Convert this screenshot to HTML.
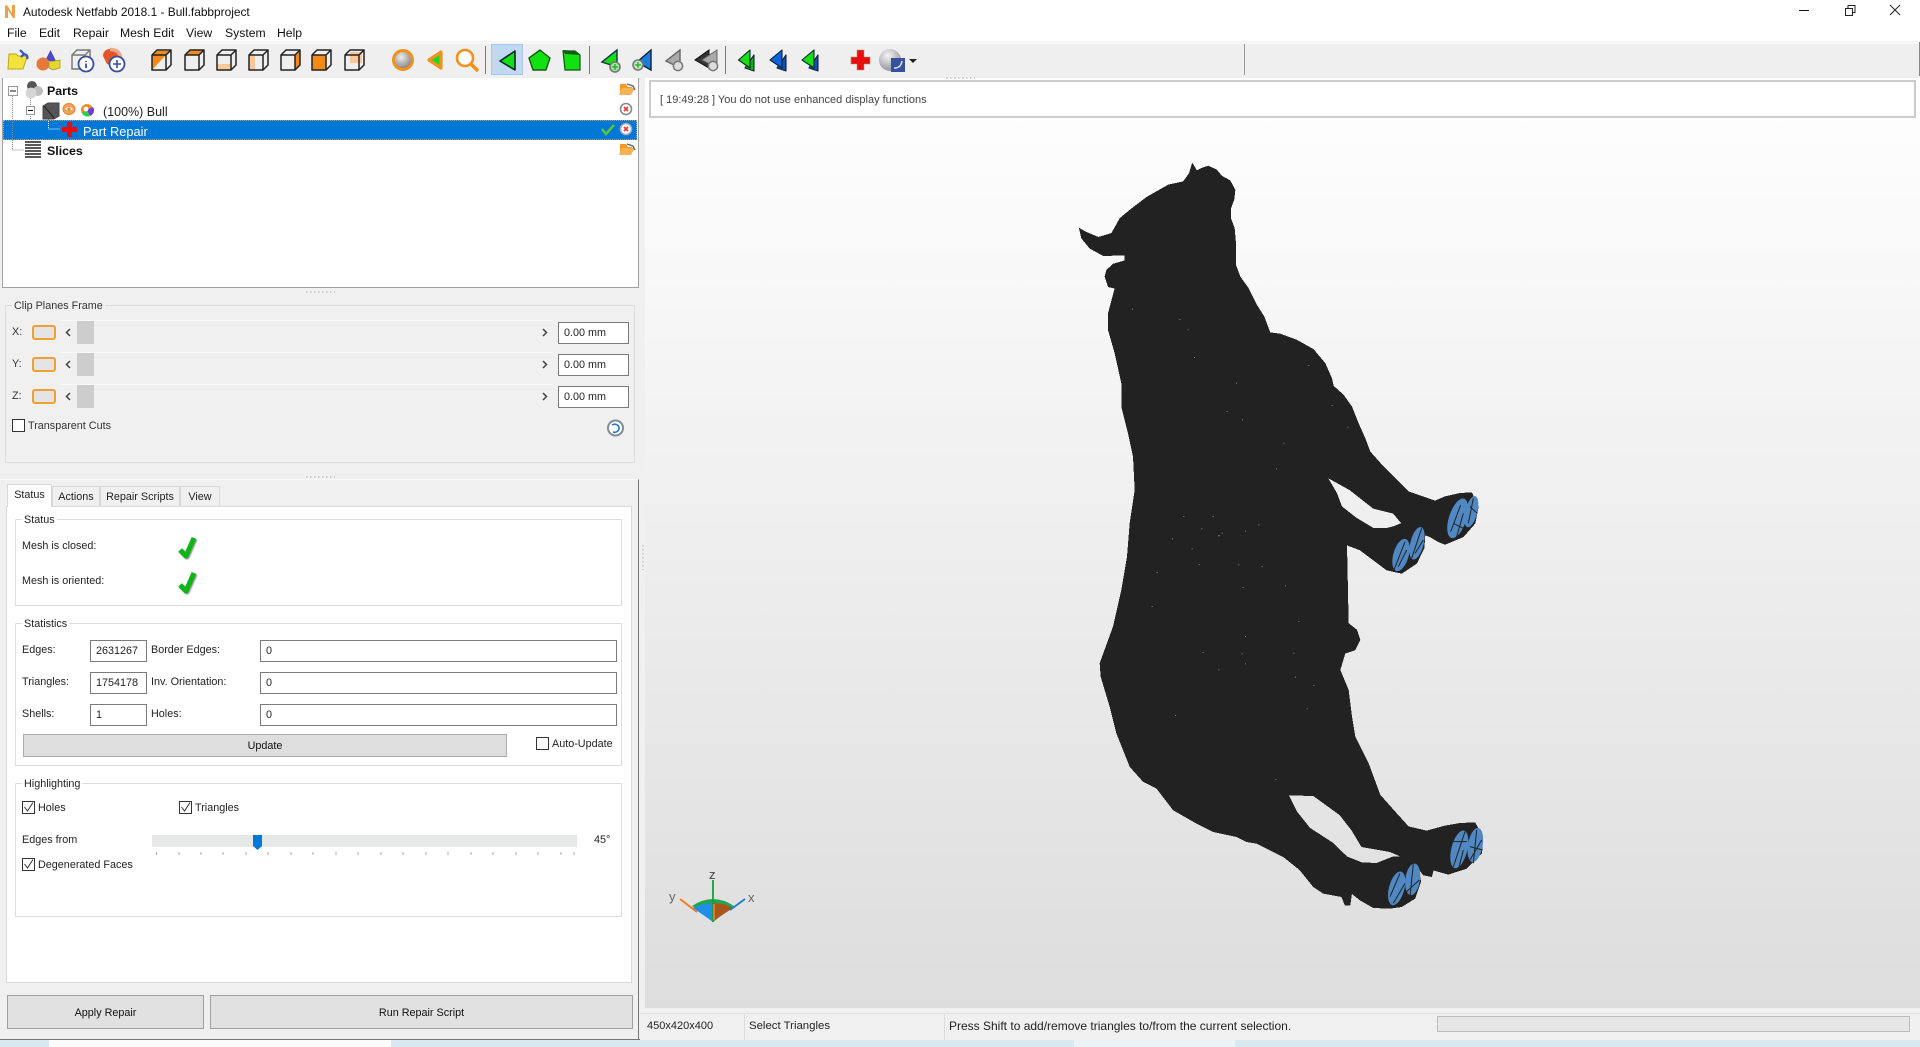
<!DOCTYPE html>
<html><head><meta charset="utf-8"><title>Autodesk Netfabb 2018.1 - Bull.fabbproject</title>
<style>
html,body{margin:0;padding:0;width:1920px;height:1047px;overflow:hidden;background:#f0f0f0}
body{position:relative;font-family:"Liberation Sans",sans-serif;font-size:10.8px;color:#222}
.a{position:absolute;box-sizing:border-box}
.t{position:absolute;white-space:nowrap;height:16px;line-height:16px;margin-top:1px}
.n{margin-top:0}
.m{font-size:12.2px;color:#111;height:18px;line-height:18px;margin-top:0}
.g{position:absolute;box-sizing:border-box;border:1px solid #dcdcdc}
.i{position:absolute;box-sizing:border-box;background:#fff;border:1px solid #7a7a7a;line-height:20px;padding-left:5px;font-size:10.8px;color:#222}
.c{position:absolute;box-sizing:border-box;width:13px;height:13px;border:1px solid #333;background:#fff}
.b{position:absolute;box-sizing:border-box;background:#e1e1e1;border:1px solid #adadad;text-align:center;font-size:10.8px;color:#111}
.th{position:absolute;left:77px;width:17px;height:23px;background:#cdcdcd}
.tr{position:absolute;left:60px;width:493px;height:1px;background:#f9f9f9}
.cb{position:absolute;left:32px;width:24px;height:15px;box-sizing:border-box;border:2px solid #f0a030;border-radius:3px;background:#e4e4e4}
.tab{position:absolute;box-sizing:border-box;border:1px solid #d9d9d9;border-bottom:none;background:#f0f0f0;text-align:center;font-size:10.8px;line-height:20px;top:486px;height:20px}
</style></head><body>

<!-- title + menu -->
<div class="a" style="left:0;top:0;width:1920px;height:41px;background:#fff"></div>
<div class="t n" style="left:23px;top:3px;font-size:11.9px;height:18px;line-height:18px;color:#111">Autodesk Netfabb 2018.1 - Bull.fabbproject</div>
<div class="t m" style="left:7px;top:24px">File</div>
<div class="t m" style="left:39px;top:24px">Edit</div>
<div class="t m" style="left:73px;top:24px">Repair</div>
<div class="t m" style="left:120px;top:24px">Mesh Edit</div>
<div class="t m" style="left:186px;top:24px">View</div>
<div class="t m" style="left:225px;top:24px">System</div>
<div class="t m" style="left:277px;top:24px">Help</div>

<!-- toolbar -->
<div class="a" style="left:0;top:41px;width:1920px;height:37px;background:#efefef;border-top:3px solid #f6f6f6"></div>
<div class="a" style="left:1919px;top:42px;width:1px;height:34px;background:#888"></div>
<div class="a" style="left:491px;top:44px;width:32px;height:31px;background:#bfdaf0;border:1px solid #a4c8e6"></div>
<div class="a" style="left:485px;top:46px;width:1px;height:28px;background:#777"></div>
<div class="a" style="left:589px;top:46px;width:1px;height:28px;background:#777"></div>
<div class="a" style="left:725px;top:46px;width:1px;height:28px;background:#777"></div>
<div class="a" style="left:1244px;top:44px;width:1px;height:31px;background:#999"></div>

<!-- tree panel -->
<div class="a" style="left:2px;top:78px;width:637px;height:210px;background:#fff;border:1px solid #a0a0a0;border-top:none"></div>
<div class="a" style="left:3px;top:120px;width:634px;height:20px;background:#0078d7;border:1px dotted #8ab"></div>
<div class="t" style="left:47px;top:81px;font-size:12.4px;font-weight:bold;height:18px;line-height:18px;color:#111">Parts</div>
<div class="t" style="left:103px;top:102px;font-size:12.5px;height:18px;line-height:18px;color:#222">(100%) Bull</div>
<div class="t" style="left:83px;top:122px;font-size:12.8px;height:18px;line-height:18px;color:#fff">Part Repair</div>
<div class="t" style="left:47px;top:141px;font-size:12.4px;font-weight:bold;height:18px;line-height:18px;color:#111">Slices</div>

<!-- clip planes -->
<div class="g" style="left:5px;top:305px;width:630px;height:158px"></div>
<div class="t" style="left:12px;top:297px;background:#f0f0f0;padding:0 2px;color:#333">Clip Planes Frame</div>
<div class="t" style="left:12px;top:323px;color:#333">X:</div>
<div class="t" style="left:12px;top:355px;color:#333">Y:</div>
<div class="t" style="left:12px;top:387px;color:#333">Z:</div>
<div class="cb" style="top:325px"></div><div class="cb" style="top:357px"></div><div class="cb" style="top:389px"></div>
<div class="tr" style="top:320px"></div><div class="tr" style="top:352px"></div><div class="tr" style="top:384px"></div>
<div class="th" style="top:321px"></div><div class="th" style="top:353px"></div><div class="th" style="top:385px"></div>
<div class="i" style="left:558px;top:322px;width:71px;height:22px">0.00 mm</div>
<div class="i" style="left:558px;top:354px;width:71px;height:22px">0.00 mm</div>
<div class="i" style="left:558px;top:386px;width:71px;height:22px">0.00 mm</div>
<div class="c" style="left:12px;top:419px"></div>
<div class="t" style="left:28px;top:417px;color:#333">Transparent Cuts</div>

<!-- tab panel -->
<div class="a" style="left:0;top:479px;width:639px;height:561px;border-top:1px solid #fafafa;border-right:1px solid #777"></div>
<div class="a" style="left:6px;top:506px;width:626px;height:477px;background:#fff;border:1px solid #dadada"></div>
<div class="tab" style="left:52px;width:48px">Actions</div>
<div class="tab" style="left:100px;width:80px">Repair Scripts</div>
<div class="tab" style="left:180px;width:40px">View</div>
<div class="tab" style="left:7px;width:45px;top:484px;height:23px;background:#fff;line-height:20px">Status</div>

<div class="g" style="left:15px;top:519px;width:607px;height:87px"></div>
<div class="t" style="left:22px;top:511px;background:#fff;padding:0 2px;color:#222">Status</div>
<div class="t" style="left:22px;top:537px;color:#222">Mesh is closed:</div>
<div class="t" style="left:22px;top:572px;color:#222">Mesh is oriented:</div>

<div class="g" style="left:15px;top:623px;width:607px;height:143px"></div>
<div class="t" style="left:22px;top:615px;background:#fff;padding:0 2px;color:#222">Statistics</div>
<div class="t" style="left:22px;top:641px">Edges:</div>
<div class="t" style="left:22px;top:673px">Triangles:</div>
<div class="t" style="left:22px;top:705px">Shells:</div>
<div class="t" style="left:151px;top:641px">Border Edges:</div>
<div class="t" style="left:151px;top:673px">Inv. Orientation:</div>
<div class="t" style="left:151px;top:705px">Holes:</div>
<div class="i" style="left:90px;top:640px;width:57px;height:22px">2631267</div>
<div class="i" style="left:90px;top:672px;width:57px;height:22px">1754178</div>
<div class="i" style="left:90px;top:704px;width:57px;height:22px">1</div>
<div class="i" style="left:260px;top:640px;width:357px;height:22px;padding-left:5px">0</div>
<div class="i" style="left:260px;top:672px;width:357px;height:22px">0</div>
<div class="i" style="left:260px;top:704px;width:357px;height:22px">0</div>
<div class="b" style="left:23px;top:734px;width:484px;height:23px;line-height:22px;background:#dedede">Update</div>
<div class="c" style="left:536px;top:737px"></div>
<div class="t" style="left:552px;top:735px">Auto-Update</div>

<div class="g" style="left:15px;top:783px;width:607px;height:134px"></div>
<div class="t" style="left:22px;top:775px;background:#fff;padding:0 2px">Highlighting</div>
<div class="c" style="left:22px;top:801px"></div>
<div class="t" style="left:38px;top:799px">Holes</div>
<div class="c" style="left:179px;top:801px"></div>
<div class="t" style="left:195px;top:799px">Triangles</div>
<div class="t" style="left:22px;top:831px">Edges from</div>
<div class="a" style="left:152px;top:835px;width:425px;height:12px;background:#e6e8e8"></div>
<div class="t" style="left:594px;top:831px">45°</div>
<div class="c" style="left:22px;top:858px"></div>
<div class="t" style="left:38px;top:856px">Degenerated Faces</div>

<div class="b" style="left:7px;top:995px;width:197px;height:34px;line-height:34px;border-color:#a0a0a0">Apply Repair</div>
<div class="b" style="left:210px;top:995px;width:423px;height:34px;line-height:34px;border-color:#a0a0a0">Run Repair Script</div>

<!-- viewport -->
<div class="a" style="left:645px;top:78px;width:1275px;height:930px;background:linear-gradient(#ffffff,#dddddd)"></div>
<div class="a" style="left:649px;top:80px;width:1267px;height:38px;background:#fff;border:2px solid #cccccc"></div>
<div class="t" style="left:660px;top:91px;color:#444;font-size:11px">[ 19:49:28 ] You do not use enhanced display functions</div>

<!-- status bar -->
<div class="a" style="left:640px;top:1008px;width:1280px;height:32px;background:#f0f0f0;border-top:5px solid #f0f0f0;border-bottom:0"></div>
<div class="a" style="left:640px;top:1013px;width:1280px;height:1px;background:#e2e2e2"></div>
<div class="a" style="left:744px;top:1014px;width:1px;height:26px;background:#dcdcdc"></div>
<div class="a" style="left:944px;top:1014px;width:1px;height:26px;background:#dcdcdc"></div>
<div class="t n" style="left:647px;top:1017px;font-size:11px;height:18px;line-height:18px">450x420x400</div>
<div class="t n" style="left:749px;top:1017px;font-size:11.4px;height:18px;line-height:18px">Select Triangles</div>
<div class="t n" style="left:949px;top:1017px;font-size:12px;height:18px;line-height:18px">Press Shift to add/remove triangles to/from the current selection.</div>
<div class="a" style="left:1437px;top:1016px;width:473px;height:16px;background:#e6e6e6;border:1px solid #bcbcbc"></div>

<!-- bottom strip -->
<div class="a" style="left:0;top:1040px;width:1920px;height:7px;background:#d9e9f2;overflow:hidden"></div>
<div class="a" style="left:0;top:1039px;width:640px;height:1px;background:#777"></div>
<div class="a" style="left:49px;top:1040px;width:342px;height:7px;background:#fbfbfb"></div>
<div class="a" style="left:1074px;top:1040px;width:161px;height:7px;background:#ecf3f7"></div>

<!-- graphics overlay -->
<svg class="a" style="left:0;top:0" width="1920" height="1047" viewBox="0 0 1920 1047" fill="none">
<defs>
<radialGradient id="sp" cx=".4" cy=".35" r=".7"><stop offset="0" stop-color="#eee"/><stop offset="1" stop-color="#777"/></radialGradient>
<radialGradient id="sp2" cx=".4" cy=".3" r=".8"><stop offset="0" stop-color="#f4f4f4"/><stop offset="1" stop-color="#889"/></radialGradient>
<g id="cube" stroke="#222" stroke-width="1.5" stroke-linejoin="round"><path d="M0 5H14V20H0ZM0 5L5 0H19V15L14 20M14 5L19 0"/></g>
<filter id="sm" x="-5%" y="-5%" width="110%" height="110%"><feGaussianBlur stdDeviation="1.1"/><feComponentTransfer><feFuncA type="linear" slope="7" intercept="-3"/></feComponentTransfer></filter>
<filter id="ds" x="-30%" y="-30%" width="160%" height="160%"><feDropShadow dx="1" dy="1" stdDeviation=".8" flood-color="#555" flood-opacity=".7"/></filter>
</defs>

<!-- N logo -->
<path d="M5 18V6L7 5L12 13V5H15V18H13L8 10V18Z" fill="#e8a24c"/>

<!-- window controls -->
<path d="M1799 10.500H1809" stroke="#111" stroke-width="1"/>
<path d="M1845.500 8.500H1852.500V15.500H1845.500ZM1848 8.500V5.500H1855V12.500H1852.500" stroke="#222" stroke-width="1"/>
<path d="M1890 5L1900 15M1900 5L1890 15" stroke="#222" stroke-width="1"/>

<!-- toolbar: file icons -->
<path d="M9 54L16 54L18 56L25 56L27 57L23 69H8Z" fill="#f2e33c" stroke="#b9a81e"/>
<path d="M20 50L24 54L21 57M24 54C24 54 29 55 27 59" stroke="#3156c5" stroke-width="2.2"/>
<path d="M50.500 50L56 61H45Z" fill="#4a4ac4"/>
<circle cx="43" cy="64" r="6.500" fill="#e6793a"/>
<path d="M49 62L60 60V68L53 70L49 68Z" fill="#e5d52f" stroke="#9f9420" stroke-width=".7"/>
<path d="M72 55L77 50H90V65M72 55H85V69H72ZM85 55L90 50" stroke="#777" stroke-width="1.4"/>
<circle cx="86" cy="64" r="7.500" fill="#fff" stroke="#3a4f9a" stroke-width="1.800"/>
<path d="M86 61V62M86 63.500V68" stroke="#3a4f9a" stroke-width="1.800"/>
<path d="M103 56C103 51 107 49 110 49C116 49 120 52 121 58L114 66L107 64Z" fill="#e2562a"/>
<path d="M110 49.500C116 49.500 120 52 120.500 58" stroke="#f3a68c" stroke-width="3.600"/>
<circle cx="117" cy="64" r="7.500" fill="#fff" stroke="#3a4f9a" stroke-width="1.800"/>
<path d="M113 64H121M117 60V68" stroke="#3a4f9a" stroke-width="1.600"/>

<!-- cubes -->
<g transform="translate(152,50)"><path d="M0 5H14L0 20Z" fill="#f28a1a"/><path d="M1 5L5 1H18L14 5Z" fill="#f28a1a"/><use href="#cube"/></g>
<g transform="translate(185,50)"><path d="M0 5L5 0H19L14 5Z" fill="#f28a1a"/><use href="#cube"/></g>
<g transform="translate(217,50)"><path d="M0 14H14V20H0Z" fill="#fac79a"/><use href="#cube"/></g>
<g transform="translate(249,50)"><path d="M0 5H6V20H0Z" fill="#fac79a"/><use href="#cube"/></g>
<g transform="translate(281,50)"><path d="M14 5L19 0V15L14 20Z" fill="#f28a1a"/><use href="#cube"/></g>
<g transform="translate(312,50)"><path d="M0 5H14V20H0Z" fill="#f28a1a"/><use href="#cube"/></g>
<g transform="translate(345,50)"><path d="M5 2H17V13H5Z" fill="#fac79a"/><use href="#cube"/></g>

<!-- sphere, tri, magnifier -->
<circle cx="403" cy="60" r="9.500" fill="url(#sp)" stroke="#f0921c" stroke-width="3"/>
<path d="M441 52V68L429 60Z" fill="#1fd62a" stroke="#f0921c" stroke-width="3.200" stroke-linejoin="round"/>
<circle cx="465" cy="58" r="8" fill="#fff" stroke="#f0921c" stroke-width="2.600"/>
<path d="M471 64L478 71" stroke="#f0921c" stroke-width="3.600"/>
<path d="M515 51V70L500 61Z" fill="#11e011" stroke="#123" stroke-width="1.600" stroke-linejoin="round"/>
<path d="M540 50L550 58L546 70H533L529 58Z" fill="#11e011" stroke="#1a5a1a" stroke-width="1.400" stroke-linejoin="round"/>
<path d="M563 51L575 51L580 55V70H565Z" fill="#11e011" stroke="#165016" stroke-width="1.200"/>
<path d="M563 50L575 51L580 55L565 54Z" fill="#0c5c14"/>

<!-- selection tris -->
<path d="M617 50V67L602 62Z" fill="#11e011" stroke="#134" stroke-width="1.400"/>
<circle cx="615" cy="67" r="5" fill="#9fe79f" stroke="#777" stroke-width="1.600"/>
<path d="M612 67H618M615 64V70" stroke="#2a2" stroke-width="1.300"/>
<path d="M651 50V70L637 62Z" fill="#1a7fdc" stroke="#123" stroke-width="1.400"/>
<circle cx="638" cy="65" r="5" fill="#bfe9bf" stroke="#777" stroke-width="1.600"/>
<path d="M635 65H641M638 62V68" stroke="#2a2" stroke-width="1.300"/>
<path d="M680 50V68L666 61Z" fill="#aaa" stroke="#666" stroke-width="1.400"/>
<circle cx="678" cy="66" r="4.600" fill="#ddd" stroke="#777" stroke-width="1.500"/>
<path d="M709 50V68L695 60Z" fill="#333" stroke="#111"/>
<path d="M717 50V68L702 60Z" fill="#aaa" stroke="#666"/>
<circle cx="713" cy="66" r="4.600" fill="#ddd" stroke="#777" stroke-width="1.500"/>

<!-- double triangles: back triangle behind, front triangle on top -->
<path d="M754 55V71L745 68Z" fill="#10b010" stroke="#123" stroke-width="1.100" stroke-linejoin="round"/>
<path d="M750 50V68L738.500 60Z" fill="#14e014" stroke="#123" stroke-width="1.100" stroke-linejoin="round"/>
<path d="M786 55V71L777 68Z" fill="#0b50b8" stroke="#123" stroke-width="1.100" stroke-linejoin="round"/>
<path d="M782 50V68L770 60Z" fill="#0b62e0" stroke="#123" stroke-width="1.100" stroke-linejoin="round"/>
<path d="M818 55V71L809 68Z" fill="#0b50b8" stroke="#123" stroke-width="1.100" stroke-linejoin="round"/>
<path d="M814 50V68L802 60Z" fill="#14e014" stroke="#123" stroke-width="1.100" stroke-linejoin="round"/>

<path d="M857 50H864V57H870V64H864V70H857V64H851V57H857Z" fill="#e60d0d" stroke="#b88" stroke-width=".6"/>
<circle cx="890" cy="60" r="11" fill="url(#sp2)"/>
<rect x="891" y="58" width="14" height="14" fill="#34509f"/>
<path d="M894 68C899 68 901 66 902 61" stroke="#dfe6f5" stroke-width="1.500"/>
<path d="M909 59H917L913 63Z" fill="#222"/>

<!-- splitter dots -->
<path d="M946 78H975M306 292H335M306 477H335" stroke="#aaa" stroke-width="1" stroke-dasharray="1.500 2.500"/>
<path d="M643 545V570" stroke="#aaa" stroke-width="1" stroke-dasharray="1.500 2.500"/>

<!-- tree -->
<path d="M12.500 94V150H24M30.500 98V105M30.500 114V120" stroke="#888" stroke-dasharray="1 1"/>
<path d="M48.500 119V129H60" stroke="#fff" stroke-dasharray="1 1"/>
<path d="M48.500 119V120" stroke="#888"/>
<rect x="8.500" y="86.500" width="9" height="9" fill="#fff" stroke="#999"/><path d="M10 91H16" stroke="#111"/>
<rect x="26.500" y="106.500" width="8" height="8" fill="#fff" stroke="#999"/><path d="M28 110.500H33" stroke="#111"/>
<circle cx="32" cy="86" r="5" fill="#555"/><circle cx="38" cy="91" r="5" fill="#bdbdbd"/><circle cx="31" cy="93" r="5.400" fill="#d5d5d5"/>
<path d="M43 106L48 103H59V116L54 119H43Z" fill="#555" stroke="#444"/><path d="M44 106L54 118" stroke="#222"/>
<ellipse cx="69" cy="109" rx="6" ry="5.500" fill="#f2a05a" stroke="#e8872a"/><path d="M65 109Q69 105 73 109Q69 112 65 109Z" fill="#fff"/><circle cx="69" cy="109" r="1.600" fill="#e8872a"/>
<circle cx="87" cy="110" r="6" fill="#f08a2a"/><path d="M87 110L93 107A6 6 0 0 1 90 116Z" fill="#6a3fd6"/><path d="M87 110L90 116A6 6 0 0 1 82 113Z" fill="#2ad04a"/><circle cx="86" cy="109" r="2.400" fill="#fff"/>
<path d="M68 124H73V129H78V134H73V139H68V134H63V129H68Z" fill="#e60d0d" transform="translate(-1,-2)"/>
<path d="M25 143H41M25 146H41M25 149H41M25 152H41M25 155H41M25 158H41" stroke="#222" stroke-width="1.500" transform="translate(0,-1)"/>
<g id="fold"><path d="M620 84H626L628 87H632V92L630 95H620Z" fill="#f09a2c"/><path d="M622 88L635 88L631 95H619Z" fill="#f7b254"/><path d="M627 84L633 86L635 90" stroke="#666" stroke-width="1.400"/></g>
<g transform="translate(0,60)"><path d="M620 84H626L628 87H632V92L630 95H620Z" fill="#f09a2c"/><path d="M622 88L635 88L631 95H619Z" fill="#f7b254"/><path d="M627 84L633 86L635 90" stroke="#666" stroke-width="1.400"/></g>
<circle cx="626" cy="109" r="5.500" fill="#fff" stroke="#888" stroke-width="1.600"/><path d="M624 107L628 111M628 107L624 111" stroke="#e33" stroke-width="1.600"/>
<circle cx="626" cy="129" r="5.500" fill="#fff" stroke="#aab" stroke-width="1.600"/><path d="M624 127L628 131M628 127L624 131" stroke="#e33" stroke-width="1.600"/>
<path d="M602 129L606 134L614 125" stroke="#5cc23a" stroke-width="2.600"/>

<!-- chevrons -->
<path d="M70 329L66.500 332.500L70 336M70 361L66.500 364.500L70 368M70 393L66.500 396.500L70 400" stroke="#444" stroke-width="1.500"/>
<path d="M543 329L546.500 332.500L543 336M543 361L546.500 364.500L543 368M543 393L546.500 396.500L543 400" stroke="#444" stroke-width="1.500"/>
<circle cx="615.500" cy="428" r="7.500" fill="#fff" stroke="#7f8c9a" stroke-width="2"/>
<path d="M612 425C615 423 619 425 619 428C619 431 616 433 613 432" stroke="#1e78d4" stroke-width="1.600"/>

<!-- big checks -->
<g filter="url(#ds)">
<path d="M180 550L186 556L194 538" stroke="#08b518" stroke-width="5" stroke-linejoin="round"/>
<path d="M180 585L186 591L194 573" stroke="#08b518" stroke-width="5" stroke-linejoin="round"/>
</g>

<!-- checkbox ticks -->
<path d="M24.500 807L27.500 811L33 802.500M181.500 807L184.500 811L190 802.500M24.500 864L27.500 868L33 859.500" stroke="#333" stroke-width="1"/>

<!-- slider -->
<path d="M253 835H262V846L257.500 850L253 846Z" fill="#0078d7"/>
<path d="M156.500 852v3M179 852v3M201 852v3M223 852v3M246 852v3M268 852v3M291 852v3M313 852v3M336 852v3M358 852v3M381 852v3M403 852v3M426 852v3M448 852v3M471 852v3M493 852v3M516 852v3M538 852v3M561 852v3M574 852v3" stroke="#aaa"/>

<!-- bull -->
<g transform="translate(1040,140) scale(.33333)">
<path filter="url(#sm)" fill="#222222" stroke="#222222" stroke-width="2" fill-rule="evenodd" d="M457 70L470 92L485 85L505 78L530 90L545 108L570 122L585 150L582 178L572 205L572 235L583 265L587 310L587 375L600 410L625 445L650 495L672 530L690 578L720 582L770 600L820 628L855 670L875 715L880 738L910 765L935 800L955 850L975 895L990 935L1030 980L1075 1025L1105 1055L1185 1083L1215 1070L1260 1060L1295 1058L1315 1100L1305 1150L1270 1190L1215 1213L1195 1205L1170 1190L1155 1185L1152 1225L1130 1270L1085 1300L1040 1290L1000 1260L960 1230L920 1215L925 1450L950 1470L960 1500L945 1530L915 1540L900 1590L925 1650L935 1730L945 1790L985 1870L1020 1965L1060 2010L1105 2060L1160 2073L1215 2058L1260 2050L1305 2048L1328 2090L1325 2140L1280 2185L1225 2203L1180 2190L1175 2210L1150 2205L1135 2185L1142 2225L1125 2275L1085 2300L1050 2305L1000 2303L960 2280L935 2260L930 2295L915 2295L905 2270L850 2260L820 2240L780 2190L730 2150L650 2110L620 2105L590 2090L520 2075L470 2050L400 2010L350 1945L310 1925L270 1880L230 1780L210 1700L183 1610L180 1570L220 1460L245 1350L262 1250L270 1150L285 1050L280 950L265 880L245 800L245 730L225 640L205 570L205 520L225 445L205 440L195 410L200 390L220 372L255 362L255 345L190 347L150 325L125 295L118 265L135 275L175 292L215 280L240 235L270 210L320 172L385 135L430 125L448 100Z
M862 1012L930 1050L1000 1105L1060 1120L1085 1150L1060 1160L1040 1165L1000 1165L950 1135L905 1100L890 1060Z
M745 1965L820 1967L900 2025L935 2070L965 2120L1050 2135L1085 2150L1060 2150L1010 2170L965 2168L920 2150L880 2110L810 2065L770 2015Z"/>
<g fill="#4f88c3">
<ellipse cx="1253" cy="1135" rx="26" ry="62" transform="rotate(18 1253 1135)"/>
<ellipse cx="1294" cy="1115" rx="18" ry="48" transform="rotate(14 1294 1115)"/>
<ellipse cx="1083" cy="1245" rx="23" ry="50" transform="rotate(16 1083 1245)"/>
<ellipse cx="1131" cy="1210" rx="20" ry="50" transform="rotate(14 1131 1210)"/>
<ellipse cx="1258" cy="2128" rx="24" ry="58" transform="rotate(14 1258 2128)"/>
<ellipse cx="1306" cy="2115" rx="22" ry="52" transform="rotate(10 1306 2115)"/>
<ellipse cx="1070" cy="2245" rx="23" ry="52" transform="rotate(15 1070 2245)"/>
<ellipse cx="1118" cy="2218" rx="22" ry="48" transform="rotate(8 1118 2218)"/>
</g>
<path stroke="#222" stroke-width="3" d="M1232 1175L1262 1095M1240 1150L1270 1165M1250 1190L1270 1120M1285 1150L1300 1075M1290 1100L1312 1120M1062 1290L1095 1205M1075 1280L1100 1230M1115 1255L1145 1165M1125 1240L1150 1200M1240 2180L1275 2075M1240 2105L1280 2105M1255 2190L1270 2130M1290 2160L1325 2100M1300 2170L1310 2070M1290 2120L1328 2130M1050 2270L1080 2200M1060 2290L1095 2230M1100 2255L1138 2220M1110 2270L1120 2170"/>
<g fill="#77899a">
<rect x="276" y="506" width="3" height="3"/><rect x="418" y="537" width="3" height="3"/><rect x="443" y="568" width="3" height="3"/><rect x="462" y="651" width="3" height="3"/><rect x="588" y="728" width="3" height="3"/><rect x="805" y="675" width="3" height="3"/><rect x="875" y="795" width="3" height="3"/><rect x="560" y="813" width="3" height="3"/><rect x="606" y="838" width="3" height="3"/><rect x="922" y="860" width="3" height="3"/><rect x="730" y="908" width="3" height="3"/><rect x="708" y="985" width="3" height="3"/><rect x="430" y="1128" width="3" height="3"/><rect x="518" y="1128" width="3" height="3"/><rect x="655" y="1153" width="3" height="3"/><rect x="615" y="1172" width="3" height="3"/><rect x="484" y="1165" width="3" height="3"/><rect x="535" y="1185" width="4" height="4"/><rect x="545" y="1178" width="3" height="3"/><rect x="396" y="1195" width="3" height="3"/><rect x="455" y="1225" width="3" height="3"/><rect x="476" y="1272" width="3" height="3"/><rect x="595" y="1273" width="3" height="3"/><rect x="665" y="1278" width="3" height="3"/><rect x="350" y="1296" width="3" height="3"/><rect x="735" y="1336" width="3" height="3"/><rect x="608" y="1341" width="3" height="3"/><rect x="335" y="1398" width="3" height="3"/><rect x="775" y="1443" width="3" height="3"/><rect x="615" y="1488" width="3" height="3"/><rect x="488" y="1536" width="3" height="3"/><rect x="605" y="1540" width="3" height="3"/><rect x="760" y="1538" width="3" height="3"/><rect x="615" y="1570" width="3" height="3"/><rect x="535" y="1588" width="3" height="3"/><rect x="765" y="1610" width="3" height="3"/><rect x="820" y="1635" width="3" height="3"/><rect x="800" y="1705" width="3" height="3"/><rect x="405" y="1725" width="3" height="3"/><rect x="706" y="1917" width="3" height="3"/>
</g>
</g>

<!-- axis gizmo -->
<path d="M692 906Q713 892 734 906L713 922Z" fill="#22a84a"/>
<path d="M693 908Q703 903 712 903V921Z" fill="#1f8fe8"/>
<path d="M713 903Q724 903 733 908L713 921Z" fill="#a8561c"/>
<path d="M713 880V922" stroke="#1a9a4a" stroke-width="1.800"/>
<path d="M714 904V920" stroke="#ef7d14" stroke-width="1.800"/>
<path d="M680 899L697 912" stroke="#ef7d14" stroke-width="1.800"/>
<path d="M745 899L730 910" stroke="#1a7fd4" stroke-width="1.800"/>
<text x="709" y="879" font-family="Liberation Sans" font-size="13" fill="#444">z</text>
<text x="669" y="901" font-family="Liberation Sans" font-size="13" fill="#666">y</text>
<text x="748" y="902" font-family="Liberation Sans" font-size="13" fill="#666">x</text>
</svg>
</body></html>
